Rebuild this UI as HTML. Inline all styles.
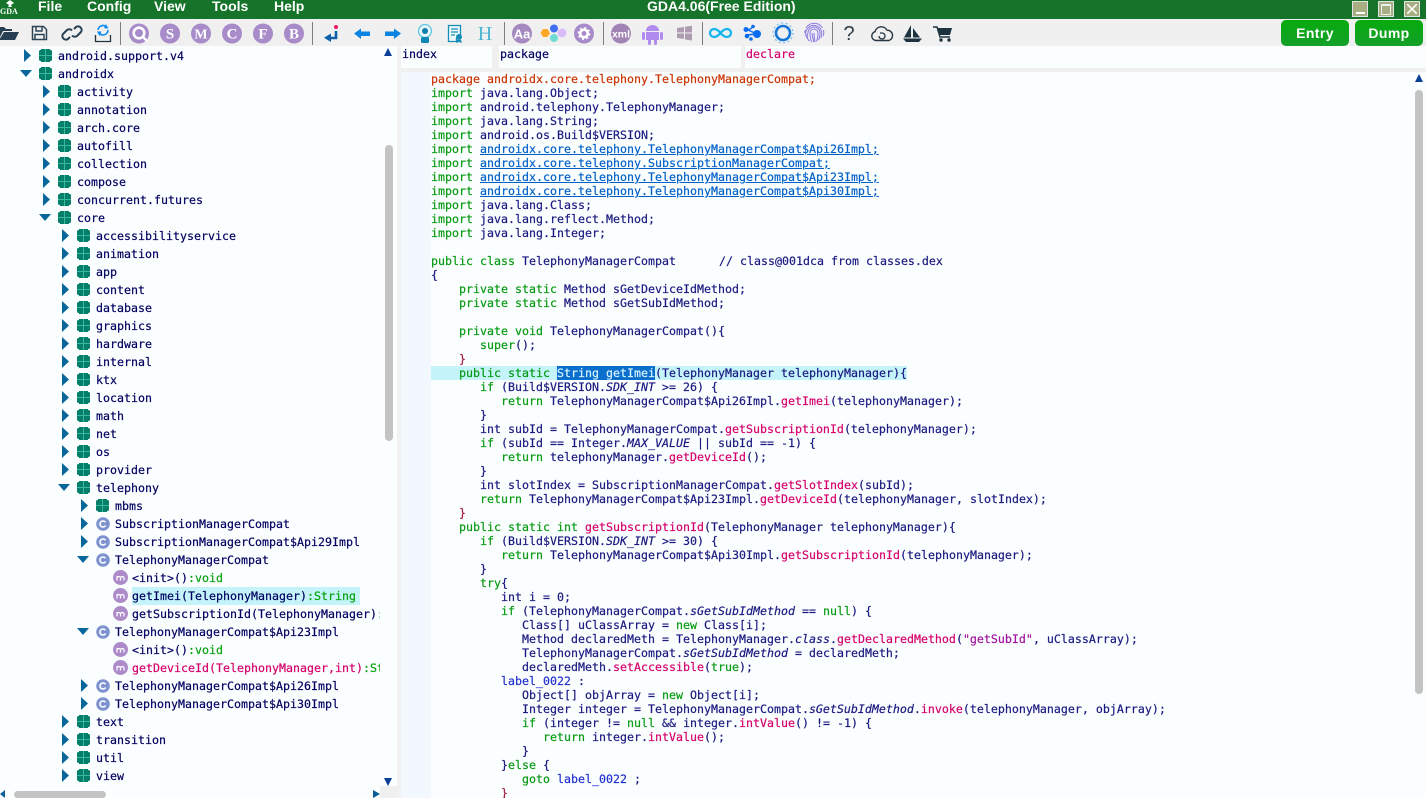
<!DOCTYPE html>
<html><head><meta charset="utf-8"><style>
html,body{margin:0;padding:0;width:1426px;height:798px;overflow:hidden;background:#fbfeff}
.ab{position:absolute}
#title{position:absolute;left:0;top:0;width:1426px;height:19px;background:#15742a;color:#fff;font:bold 14px/13px "Liberation Sans",sans-serif;overflow:hidden}
#title span{position:absolute;top:0}
#bar{position:absolute;left:0;top:19px;width:1426px;height:27px;background:#f0f0f0}
.sep{position:absolute;top:22px;width:1px;height:23px;background:#7d7d7d}
.btn{position:absolute;top:20px;height:26px;background:linear-gradient(#07ab0d,#14a02a);border-radius:5px;color:#fff;font:bold 14px/26px "Liberation Sans",sans-serif;text-align:center;letter-spacing:.4px}
.mono,.r,pre{font-family:"DejaVu Sans Mono","Liberation Mono",monospace;font-size:11.63px;-webkit-text-stroke:.2px}
#tree{position:absolute;left:0;top:47px;width:380px;height:739px;overflow:hidden;color:#000060}
.r{position:relative;height:18px;line-height:18px;white-space:pre;--x:calc(var(--l)*19px)}
.r svg{position:absolute}
.r .a{left:calc(var(--x) + 24px);top:2px;width:7px;height:13px}
.r .d{left:calc(var(--x) + 20px);top:5px;width:12px;height:7px}
.r .i{left:calc(var(--x) + 39px);top:2px;width:13px;height:13px}
.r .c{left:calc(var(--x) + 39px);top:2px;width:14px;height:14px}
.r .m{left:113px;top:1px;width:15px;height:15px}
.r b{font-weight:normal;position:absolute;left:calc(var(--x) + 58px);top:0}
.r b.t{left:132px}
.gr{color:#07a20e}
.sc{position:absolute;background:#c3c3c3;border-radius:4px}
.hd{position:absolute;top:46px;height:22px;background:#fbfeff;font-family:"DejaVu Sans Mono","Liberation Mono",monospace;font-size:11.63px;line-height:17px;-webkit-text-stroke:.2px}
pre{position:absolute;left:431px;top:72px;margin:0;line-height:14px;color:#1a1a80;width:983px;height:726px;overflow:hidden}
pre i{font-style:italic}
.k{color:#079a12}.p{color:#cc3300}.f{color:#d6006c}.u{color:#0060c8;text-decoration:underline}.l{color:#2030d0}.s{color:#a0109c}.e{color:#a02040}
.sl{background:#0a6ecc;color:#d8f4ff}
</style></head><body>
<svg width="0" height="0" style="position:absolute"><defs>
<symbol id="ar" viewBox="0 0 7 13"><path d="M0 0L7 6.500L0 13Z" fill="#08669a"/></symbol>
<symbol id="ad" viewBox="0 0 12 7"><path d="M0 0H12L6 7Z" fill="#08669a"/></symbol>
<symbol id="pk" viewBox="0 0 13 13"><path d="M2 0h9v1h1l1 1v9l-1 1h-1v1H2v-1H1l-1-1V2l1-1h1z" fill="#04806a"/><path d="M0 6.500h13M6.500 0v13" stroke="#3cb8a2" stroke-width="1"/></symbol>
<symbol id="cl" viewBox="0 0 14 14"><circle cx="7" cy="7" r="6.800" fill="#7e92d0"/><circle cx="7" cy="7" r="3" fill="none" stroke="#fff" stroke-width="1.600" stroke-dasharray="15 4" transform="rotate(30 7 7)"/></symbol>
<symbol id="mt" viewBox="0 0 15 15"><circle cx="7.500" cy="7.500" r="7.500" fill="#ad8bc9"/><path d="M4 10.500V6M4 7.500q1.750-2 3.500 0v3M7.500 7.500q1.750-2 3.500 0v3" fill="none" stroke="#fff" stroke-width="1.200"/></symbol>
</defs></svg>

<div id="title">
<svg class="ab" style="left:0;top:0" width="20" height="19" viewBox="0 0 20 19"><path d="M10 0l4 3-3 2 1 2H8l1-2-3-2z" fill="#fff"/></svg>
<span style="left:0;top:7px;font:bold 8px/10px 'Liberation Serif',serif">GDA</span>
<span style="left:38px">File</span><span style="left:87px">Config</span><span style="left:154px">View</span><span style="left:212px">Tools</span><span style="left:274px">Help</span>
<span style="left:647px">GDA4.06(Free Edition)</span>
<div class="ab" style="left:1352px;top:1px;width:14px;height:14px;background:#a8ae82;border:1px solid #dfe5e5"><div class="ab" style="left:3px;top:10px;width:9px;height:2px;background:#fff"></div></div>
<div class="ab" style="left:1378px;top:1px;width:14px;height:14px;background:#a8ae82;border:1px solid #dfe5e5"><div class="ab" style="left:2px;top:2px;width:8px;height:8px;border:1px solid #e8f0f4;border-top-width:2px"></div></div>
<div class="ab" style="left:1404px;top:1px;width:14px;height:14px;background:#a8ae82;border:1px solid #dfe5e5"><svg class="ab" style="left:2px;top:2px" width="10" height="10"><path d="M0 0L10 10M10 0L0 10" stroke="#fff" stroke-width="1.600"/></svg></div>
</div>

<div id="bar"></div>
<svg class="ab" style="left:0;top:19px" width="1280" height="27" viewBox="0 19 1280 27">
<!-- open -->
<path d="M-3 27h7l2 2h6v2H3l-4 8h-2z" fill="#263f52"/><path d="M4 32h15l-4 8H-1z" fill="#263f52"/>
<!-- save -->
<path d="M32.500 26.500h11l3 3v10h-14zM36 27v4h6v-4M35 39.500v-5h9v5" fill="none" stroke="#2c4556" stroke-width="1.500"/>
<!-- link -->
<path d="M70 37l-2 2a3.600 3.600 0 0 1-5-5l4-4a3.600 3.600 0 0 1 5 .5M74 29l2-2a3.600 3.600 0 0 1 5 5l-4 4a3.600 3.600 0 0 1-5-.5" fill="none" stroke="#263f52" stroke-width="2"/>
<!-- refresh -->
<path d="M95.500 35v6.500h15V35" fill="none" stroke="#22333f" stroke-width="1.300"/><path d="M98 30a5 5 0 0 1 8.500-3M108 30a5 5 0 0 1-8.500 3.500" fill="none" stroke="#0f8cf0" stroke-width="1.600"/><path d="M106 24l2.500 4.500-4.500-.2zM99.500 36L97 31.500h4.500z" fill="#0f8cf0"/>
<!-- circles -->
<g fill="#a88bc9"><circle cx="139" cy="33.500" r="10"/><circle cx="170" cy="33.500" r="10"/><circle cx="201" cy="33.500" r="10"/><circle cx="232" cy="33.500" r="10"/><circle cx="263" cy="33.500" r="10"/><circle cx="294" cy="33.500" r="10"/></g>
<circle cx="139" cy="33" r="5.300" fill="none" stroke="#fff" stroke-width="2.600"/><path d="M143 37l4.500 4.500" stroke="#fff" stroke-width="2.400"/>
<g fill="#fff" font-family="Liberation Serif" font-weight="bold" font-size="15" text-anchor="middle"><text x="170" y="38.500">S</text><text x="201" y="38.500" font-size="14">M</text><text x="232" y="38.500">C</text><text x="263" y="38.500">F</text><text x="294" y="38.500">B</text></g>
<!-- return -->
<circle cx="336" cy="27" r="2" fill="#f0186a"/><path d="M336 31v7h-8" fill="none" stroke="#0c5fa8" stroke-width="2.600"/><path d="M331 33.500v8.500l-7-4.200z" fill="#0c5fa8"/>
<!-- arrows -->
<path d="M354 33.500l7-5v3h9v4.500h-9v3z" fill="#0a84e0"/><path d="M401 33.500l-7-5v3h-9v4.500h9v3z" fill="#0a84e0"/>
<!-- webcam -->
<circle cx="425" cy="31" r="6.500" fill="#e6f8fb" stroke="#5cc4dc" stroke-width="1.200"/><circle cx="425" cy="31" r="3" fill="#0f7ea8"/><rect x="421" y="37" width="8" height="6" rx="1.500" fill="#0f86b8"/>
<!-- doc -->
<path d="M448.500 25.500h12v13h-4v3h-8z" fill="#eefafd" stroke="#148eb8" stroke-width="1.300"/><path d="M451 29h7M451 32h7M451 35h4" stroke="#148eb8" stroke-width="1.200"/><circle cx="459" cy="37" r="3" fill="#148eb8"/><path d="M457 40l-1 3 3-1 3 1-1-3z" fill="#148eb8"/>
<text x="485" y="40" font-family="Liberation Serif" font-size="20" fill="#4db4d4" text-anchor="middle">H</text>
<!-- Aa -->
<circle cx="522" cy="33.500" r="10" fill="#a48ac0"/><text x="522" y="38.500" font-family="Liberation Sans" font-weight="bold" font-size="13" fill="#fff" text-anchor="middle">Aa</text>
<!-- dots -->
<path d="M543 29h4.500l2.500 4-2.500 4H543l-2.500-4z" fill="#ffa726"/><circle cx="554" cy="28.500" r="4" fill="#3f6ff0"/><circle cx="554" cy="38" r="4" fill="#6fdbd2"/><circle cx="562" cy="33" r="4.500" fill="#d8bdf8"/>
<!-- gear -->
<circle cx="584" cy="33.500" r="10" fill="#a88bc9"/><circle cx="584" cy="33.500" r="3.800" fill="none" stroke="#fff" stroke-width="2.600"/><circle cx="584" cy="33.500" r="5.600" fill="none" stroke="#fff" stroke-width="1.600" stroke-dasharray="2 2.400"/>
<!-- xml -->
<circle cx="621" cy="33.500" r="10" fill="#a184b4"/><text x="621" y="37.500" font-family="Liberation Sans" font-weight="bold" font-size="10.500" fill="#fff" text-anchor="middle">xml</text>
<!-- android -->
<path d="M646 31a6.500 6 0 0 1 13 0zM646 32h13v8h-13z" fill="#b18af0"/><rect x="642" y="32" width="3" height="8" rx="1.500" fill="#b18af0"/><rect x="660" y="32" width="3" height="8" rx="1.500" fill="#b18af0"/><rect x="648" y="39" width="3" height="6" rx="1.500" fill="#b18af0"/><rect x="654" y="39" width="3" height="6" rx="1.500" fill="#b18af0"/>
<!-- windows -->
<path d="M677 28l7-1v5.500h-7zM685 26.800l7-1v6.700h-7zM677 33.500h7v5.500l-7-1zM685 33.500h7v7l-7-1z" fill="#ad9cb0"/>
<!-- infinity -->
<path d="M720.500 33c-2.500-3-4.500-4-6.500-4a4 4 0 0 0 0 8c2 0 4-1 6.500-4s4.500-4 6.500-4a4 4 0 0 1 0 8c-2 0-4-1-6.500-4z" fill="none" stroke="#13b5f0" stroke-width="2.200"/>
<!-- molecule -->
<path d="M748 30l9 4M747 35l9-1M752 28l-4 2" stroke="#0a6cf0" stroke-width="1.500"/><circle cx="757" cy="34" r="4" fill="#0a6cf0"/><circle cx="746" cy="29.500" r="2.500" fill="#0a6cf0"/><circle cx="753" cy="26.500" r="1.800" fill="#0a6cf0"/><circle cx="747" cy="36" r="2.300" fill="#0a6cf0"/><circle cx="751" cy="39" r="1.800" fill="#0a6cf0"/>
<!-- ring -->
<circle cx="783" cy="33" r="7" fill="none" stroke="#1378d8" stroke-width="2.600"/><circle cx="783" cy="33" r="10" fill="none" stroke="#6cb4f0" stroke-width="1.100" stroke-dasharray="2 2.500"/>
<!-- fingerprint -->
<circle cx="814" cy="33" r="10" fill="#efeaf8"/>
<g fill="none" stroke="#8a7cdc" stroke-width="1"><path d="M806 28a9.500 9.500 0 0 1 16.500 0M804.800 33a9 9 0 0 1 .5-3M823.200 36a9.500 9.500 0 0 0 .2-6"/><path d="M807 38a8 8 0 0 1 1-10 8 8 0 0 1 13.500 3c.5 3 0 5-.5 7"/><path d="M809.500 41a6 6 0 0 1-1.500-8 6 6 0 0 1 12 0c0 3-.5 5-1.500 7"/><path d="M812 42c-2-3-2-6-2-9a4 4 0 0 1 8 0c0 3-.5 6-1.500 8.500"/><path d="M814 33c0 3 .3 6 1 9M814 42c-1-3-2-6-1.800-9"/></g>
<text x="849" y="40" font-family="Liberation Sans" font-size="20" fill="#2e3d48" text-anchor="middle">?</text>
<!-- cloud -->
<path d="M876 40.500a4.500 4.500 0 0 1-1-8.800 6.500 6.500 0 0 1 12-1.500 5.300 5.300 0 0 1 2 10.300z" fill="none" stroke="#263540" stroke-width="1.400"/><path d="M879 36a3 3 0 1 0 3-3h-2" fill="none" stroke="#263540" stroke-width="1.300"/>
<!-- boat -->
<path d="M911 25v12.500h-7zM913 28l7 9.500h-7zM903 38.500h19l-3 3.500h-13z" fill="#1e3340"/>
<!-- cart -->
<path d="M933 27h4l3 10h10" fill="none" stroke="#1e3340" stroke-width="1.400"/><path d="M937.500 28H952l-2 7h-10.500z" fill="#1e3340"/><circle cx="941" cy="40" r="1.700" fill="#1e3340"/><circle cx="949" cy="40" r="1.700" fill="#1e3340"/>
</svg>
<div class="sep" style="left:120px"></div><div class="sep" style="left:312px"></div><div class="sep" style="left:504px"></div><div class="sep" style="left:603px"></div><div class="sep" style="left:702px"></div><div class="sep" style="left:832px"></div>
<div class="btn" style="left:1281px;width:68px">Entry</div>
<div class="btn" style="left:1355px;width:68px">Dump</div>

<div class="ab" style="left:397px;top:46px;width:4px;height:752px;background:#f2f2f2"></div>
<div class="ab" style="left:401px;top:46px;width:1025px;height:26px;background:#f0f0f0"></div>
<div class="hd" style="left:401px;width:91px;color:#000060;padding-left:1px;box-sizing:border-box">index</div>
<div class="hd" style="left:499px;width:242px;color:#000060;padding-left:1px;box-sizing:border-box">package</div>
<div class="hd" style="left:745px;width:681px;color:#d6006c;padding-left:1px;box-sizing:border-box">declare</div>
<div class="ab" style="left:401px;top:72px;width:30px;height:726px;background:#f3f7fe"></div>
<div class="ab" style="left:431px;top:366px;width:476px;height:14px;background:#c4f4f9"></div>

<div id="tree">
<div class="r" style="--l:0"><svg class="a"><use href="#ar"/></svg><svg class="i"><use href="#pk"/></svg><b>android.support.v4</b></div>
<div class="r" style="--l:0"><svg class="d"><use href="#ad"/></svg><svg class="i"><use href="#pk"/></svg><b>androidx</b></div>
<div class="r" style="--l:1"><svg class="a"><use href="#ar"/></svg><svg class="i"><use href="#pk"/></svg><b>activity</b></div>
<div class="r" style="--l:1"><svg class="a"><use href="#ar"/></svg><svg class="i"><use href="#pk"/></svg><b>annotation</b></div>
<div class="r" style="--l:1"><svg class="a"><use href="#ar"/></svg><svg class="i"><use href="#pk"/></svg><b>arch.core</b></div>
<div class="r" style="--l:1"><svg class="a"><use href="#ar"/></svg><svg class="i"><use href="#pk"/></svg><b>autofill</b></div>
<div class="r" style="--l:1"><svg class="a"><use href="#ar"/></svg><svg class="i"><use href="#pk"/></svg><b>collection</b></div>
<div class="r" style="--l:1"><svg class="a"><use href="#ar"/></svg><svg class="i"><use href="#pk"/></svg><b>compose</b></div>
<div class="r" style="--l:1"><svg class="a"><use href="#ar"/></svg><svg class="i"><use href="#pk"/></svg><b>concurrent.futures</b></div>
<div class="r" style="--l:1"><svg class="d"><use href="#ad"/></svg><svg class="i"><use href="#pk"/></svg><b>core</b></div>
<div class="r" style="--l:2"><svg class="a"><use href="#ar"/></svg><svg class="i"><use href="#pk"/></svg><b>accessibilityservice</b></div>
<div class="r" style="--l:2"><svg class="a"><use href="#ar"/></svg><svg class="i"><use href="#pk"/></svg><b>animation</b></div>
<div class="r" style="--l:2"><svg class="a"><use href="#ar"/></svg><svg class="i"><use href="#pk"/></svg><b>app</b></div>
<div class="r" style="--l:2"><svg class="a"><use href="#ar"/></svg><svg class="i"><use href="#pk"/></svg><b>content</b></div>
<div class="r" style="--l:2"><svg class="a"><use href="#ar"/></svg><svg class="i"><use href="#pk"/></svg><b>database</b></div>
<div class="r" style="--l:2"><svg class="a"><use href="#ar"/></svg><svg class="i"><use href="#pk"/></svg><b>graphics</b></div>
<div class="r" style="--l:2"><svg class="a"><use href="#ar"/></svg><svg class="i"><use href="#pk"/></svg><b>hardware</b></div>
<div class="r" style="--l:2"><svg class="a"><use href="#ar"/></svg><svg class="i"><use href="#pk"/></svg><b>internal</b></div>
<div class="r" style="--l:2"><svg class="a"><use href="#ar"/></svg><svg class="i"><use href="#pk"/></svg><b>ktx</b></div>
<div class="r" style="--l:2"><svg class="a"><use href="#ar"/></svg><svg class="i"><use href="#pk"/></svg><b>location</b></div>
<div class="r" style="--l:2"><svg class="a"><use href="#ar"/></svg><svg class="i"><use href="#pk"/></svg><b>math</b></div>
<div class="r" style="--l:2"><svg class="a"><use href="#ar"/></svg><svg class="i"><use href="#pk"/></svg><b>net</b></div>
<div class="r" style="--l:2"><svg class="a"><use href="#ar"/></svg><svg class="i"><use href="#pk"/></svg><b>os</b></div>
<div class="r" style="--l:2"><svg class="a"><use href="#ar"/></svg><svg class="i"><use href="#pk"/></svg><b>provider</b></div>
<div class="r" style="--l:2"><svg class="d"><use href="#ad"/></svg><svg class="i"><use href="#pk"/></svg><b>telephony</b></div>
<div class="r" style="--l:3"><svg class="a"><use href="#ar"/></svg><svg class="i"><use href="#pk"/></svg><b>mbms</b></div>
<div class="r" style="--l:3"><svg class="a"><use href="#ar"/></svg><svg class="c"><use href="#cl"/></svg><b>SubscriptionManagerCompat</b></div>
<div class="r" style="--l:3"><svg class="a"><use href="#ar"/></svg><svg class="c"><use href="#cl"/></svg><b>SubscriptionManagerCompat$Api29Impl</b></div>
<div class="r" style="--l:3"><svg class="d"><use href="#ad"/></svg><svg class="c"><use href="#cl"/></svg><b>TelephonyManagerCompat</b></div>
<div class="r" style="--l:3"><svg class="m"><use href="#mt"/></svg><b class="t">&lt;init&gt;()<span class="gr">:void</span></b></div>
<div class="r" style="--l:3"><svg class="m"><use href="#mt"/></svg><div class="ab" style="left:132px;top:0;width:228px;height:18px;background:#c4f4f9"></div><b class="t">getImei(TelephonyManager)<span class="gr">:String</span></b></div>
<div class="r" style="--l:3"><svg class="m"><use href="#mt"/></svg><b class="t">getSubscriptionId(TelephonyManager)<span class="gr">:int</span></b></div>
<div class="r" style="--l:3"><svg class="d"><use href="#ad"/></svg><svg class="c"><use href="#cl"/></svg><b>TelephonyManagerCompat$Api23Impl</b></div>
<div class="r" style="--l:3"><svg class="m"><use href="#mt"/></svg><b class="t">&lt;init&gt;()<span class="gr">:void</span></b></div>
<div class="r" style="--l:3"><svg class="m"><use href="#mt"/></svg><b class="t" style="color:#d6006c">getDeviceId(TelephonyManager,int)<span class="gr">:String</span></b></div>
<div class="r" style="--l:3"><svg class="a"><use href="#ar"/></svg><svg class="c"><use href="#cl"/></svg><b>TelephonyManagerCompat$Api26Impl</b></div>
<div class="r" style="--l:3"><svg class="a"><use href="#ar"/></svg><svg class="c"><use href="#cl"/></svg><b>TelephonyManagerCompat$Api30Impl</b></div>
<div class="r" style="--l:2"><svg class="a"><use href="#ar"/></svg><svg class="i"><use href="#pk"/></svg><b>text</b></div>
<div class="r" style="--l:2"><svg class="a"><use href="#ar"/></svg><svg class="i"><use href="#pk"/></svg><b>transition</b></div>
<div class="r" style="--l:2"><svg class="a"><use href="#ar"/></svg><svg class="i"><use href="#pk"/></svg><b>util</b></div>
<div class="r" style="--l:2"><svg class="a"><use href="#ar"/></svg><svg class="i"><use href="#pk"/></svg><b>view</b></div>
</div>

<!-- tree scrollbars -->
<div class="sc" style="left:385px;top:145px;width:8px;height:296px"></div>
<svg class="ab" style="left:384px;top:48px" width="9" height="8"><path d="M0 8H8L4 0Z" fill="#0b3f96"/></svg>
<svg class="ab" style="left:384px;top:778px" width="9" height="8"><path d="M0 0H8L4 8Z" fill="#0b3f96"/></svg>
<div class="ab" style="left:380px;top:786px;width:17px;height:12px;background:#f0f0f0"></div>
<div class="sc" style="left:14px;top:791px;width:92px;height:7px"></div>
<svg class="ab" style="left:0;top:790px" width="6" height="8"><path d="M5 0V8L0 4Z" fill="#0b5f96"/></svg>
<svg class="ab" style="left:373px;top:790px" width="7" height="8"><path d="M0 0V8L7 4Z" fill="#0b5f96"/></svg>

<pre><span class="p">package androidx.core.telephony.TelephonyManagerCompat;</span>
<span class="k">import</span> java.lang.Object;
<span class="k">import</span> android.telephony.TelephonyManager;
<span class="k">import</span> java.lang.String;
<span class="k">import</span> android.os.Build$VERSION;
<span class="k">import</span> <span class="u">androidx.core.telephony.TelephonyManagerCompat$Api26Impl;</span>
<span class="k">import</span> <span class="u">androidx.core.telephony.SubscriptionManagerCompat;</span>
<span class="k">import</span> <span class="u">androidx.core.telephony.TelephonyManagerCompat$Api23Impl;</span>
<span class="k">import</span> <span class="u">androidx.core.telephony.TelephonyManagerCompat$Api30Impl;</span>
<span class="k">import</span> java.lang.Class;
<span class="k">import</span> java.lang.reflect.Method;
<span class="k">import</span> java.lang.Integer;

<span class="k">public class</span> TelephonyManagerCompat      <span style="margin-left:1px">// class@001dca from classes.dex</span>
{
    <span class="k">private static</span> Method sGetDeviceIdMethod;
    <span class="k">private static</span> Method sGetSubIdMethod;

    <span class="k">private void</span> TelephonyManagerCompat(){
       <span class="k">super</span>();
    <span class="e">}</span>
    <span class="k">public static</span> <span class="sl">String getImei</span>(TelephonyManager telephonyManager){
       <span class="k">if</span> (Build$VERSION.<i>SDK_INT</i> &gt;= 26) {
          <span class="k">return</span> TelephonyManagerCompat$Api26Impl.<span class="f">getImei</span>(telephonyManager);
       }
       int subId = TelephonyManagerCompat.<span class="f">getSubscriptionId</span>(telephonyManager);
       <span class="k">if</span> (subId == Integer.<i>MAX_VALUE</i> || subId == -1) {
          <span class="k">return</span> telephonyManager.<span class="f">getDeviceId</span>();
       }
       int slotIndex = SubscriptionManagerCompat.<span class="f">getSlotIndex</span>(subId);
       <span class="k">return</span> TelephonyManagerCompat$Api23Impl.<span class="f">getDeviceId</span>(telephonyManager, slotIndex);
    <span class="e">}</span>
    <span class="k">public static int</span> <span class="f">getSubscriptionId</span>(TelephonyManager telephonyManager){
       <span class="k">if</span> (Build$VERSION.<i>SDK_INT</i> &gt;= 30) {
          <span class="k">return</span> TelephonyManagerCompat$Api30Impl.<span class="f">getSubscriptionId</span>(telephonyManager);
       }
       <span class="k">try</span>{
          int i = 0;
          <span class="k">if</span> (TelephonyManagerCompat.<i>sGetSubIdMethod</i> == <span class="k">null</span>) {
             Class[] uClassArray = <span class="k">new</span> Class[i];
             Method declaredMeth = TelephonyManager.<i>class</i>.<span class="f">getDeclaredMethod</span>(<span class="s">"getSubId"</span>, uClassArray);
             TelephonyManagerCompat.<i>sGetSubIdMethod</i> = declaredMeth;
             declaredMeth.<span class="f">setAccessible</span>(<span class="k">true</span>);
          <span class="l">label_0022</span> :
             Object[] objArray = <span class="k">new</span> Object[i];
             Integer integer = TelephonyManagerCompat.<i>sGetSubIdMethod</i>.<span class="f">invoke</span>(telephonyManager, objArray);
             <span class="k">if</span> (integer != <span class="k">null</span> &amp;&amp; integer.<span class="f">intValue</span>() != -1) {
                <span class="k">return</span> integer.<span class="f">intValue</span>();
             }
          }<span class="k">else</span> {
             <span class="k">goto</span> <span class="l">label_0022</span> ;
          <span class="e">}</span>
</pre>

<!-- code scrollbar -->
<svg class="ab" style="left:1415px;top:74px" width="9" height="8"><path d="M0 8H8L4 0Z" fill="#0b3f96"/></svg>
<div class="sc" style="left:1415px;top:90px;width:8px;height:604px"></div>
</body></html>
